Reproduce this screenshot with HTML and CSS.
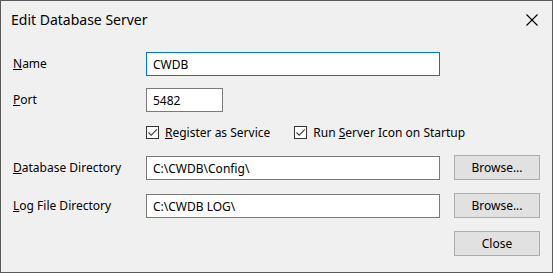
FILE: index.html
```html
<!DOCTYPE html>
<html lang="en">
<head>
  <meta charset="UTF-8" />
  <title>Edit Database Server</title>
  <link rel="stylesheet" href="styles.css">
</head>
<body>

  <div class="window">
    <div class="titlebar">
      <span class="title">Edit Database Server</span>
      <svg class="close-x" width="12" height="12" viewBox="0 0 12 12">
        <path d="M0.5 0.5 L11.5 11.5 M11.5 0.5 L0.5 11.5" stroke="#000" stroke-width="1.1" fill="none"/>
      </svg>
    </div>

    <div class="form">
      <label class="lbl"><u>N</u>ame</label>
      <input class="field focused" type="text" value="CWDB">
      <span></span>

      <label class="lbl"><u>P</u>ort</label>
      <input class="field short" type="text" value="5482">
      <span></span>

      <span></span>
      <div class="checks">
        <div class="check">
          <span class="box">
            <svg width="11" height="11" viewBox="0 0 11 11"><path d="M1.5 5.5 L4.2 8.3 L9.8 2.3" stroke="#333" stroke-width="1.1" fill="none"/></svg>
          </span>
          <span><u>R</u>egister as Service</span>
        </div>
        <div class="check">
          <span class="box">
            <svg width="11" height="11" viewBox="0 0 11 11"><path d="M1.5 5.5 L4.2 8.3 L9.8 2.3" stroke="#333" stroke-width="1.1" fill="none"/></svg>
          </span>
          <span>Run <u>S</u>erver Icon on Startup</span>
        </div>
      </div>

      <label class="lbl lower"><u>D</u>atabase Directory</label>
      <input class="field lower" type="text" value="C:\CWDB\Config\">
      <button class="btn">Browse...</button>

      <label class="lbl lower"><u>L</u>og File Directory</label>
      <input class="field lower" type="text" value="C:\CWDB LOG\">
      <button class="btn">Browse...</button>

      <span></span>
      <span></span>
      <button class="btn">Close</button>
    </div>
  </div>

</body>
</html>
```

FILE: styles.css
```css
* {
  margin: 0;
  padding: 0;
  box-sizing: border-box;
}

body {
  background: #f0f0f0;
  font-family: "Noto Sans", "Open Sans", sans-serif;
  font-size: 12px;
  color: #000;
}

.window {
  width: 553px;
  height: 273px;
  border: 1px solid #5a5a5a;
  background: #f0f0f0;
}

.titlebar {
  height: 36px;
  display: flex;
  align-items: center;
  justify-content: space-between;
  padding: 0 14px 0 10px;
}

.title {
  font-size: 14px;
  margin-top: 1px;
}

.close-x {
  display: block;
  margin-top: 1px;
}

.form {
  display: grid;
  grid-template-columns: 119px 294px 86px;
  grid-template-rows: 36px 36px 31px 38px 38px 25px;
  column-gap: 14px;
  align-items: start;
  padding: 15px 0 0 12px;
}

.lbl {
  line-height: 24px;
  height: 24px;
  white-space: nowrap;
}

.lower {
  margin-top: 1px;
}

.field {
  height: 24px;
  width: 294px;
  border: 1px solid #7a7a7a;
  background: #fff;
  font: inherit;
  padding: 0 6px;
  outline: none;
}

.field.focused {
  border-color: #0078d7;
}

.field.short {
  width: 77px;
}

.checks {
  grid-column: 2 / 4;
  display: flex;
  gap: 24px;
  padding-top: 1px;
}

.check {
  display: flex;
  align-items: center;
  gap: 6px;
  height: 14px;
}

.box {
  width: 13px;
  height: 13px;
  border: 1px solid #333;
  background: #fff;
  display: flex;
  align-items: center;
  justify-content: center;
}

.btn {
  height: 25px;
  width: 86px;
  border: 1px solid #adadad;
  background: #e1e1e1;
  font: inherit;
  color: #000;
}
```
